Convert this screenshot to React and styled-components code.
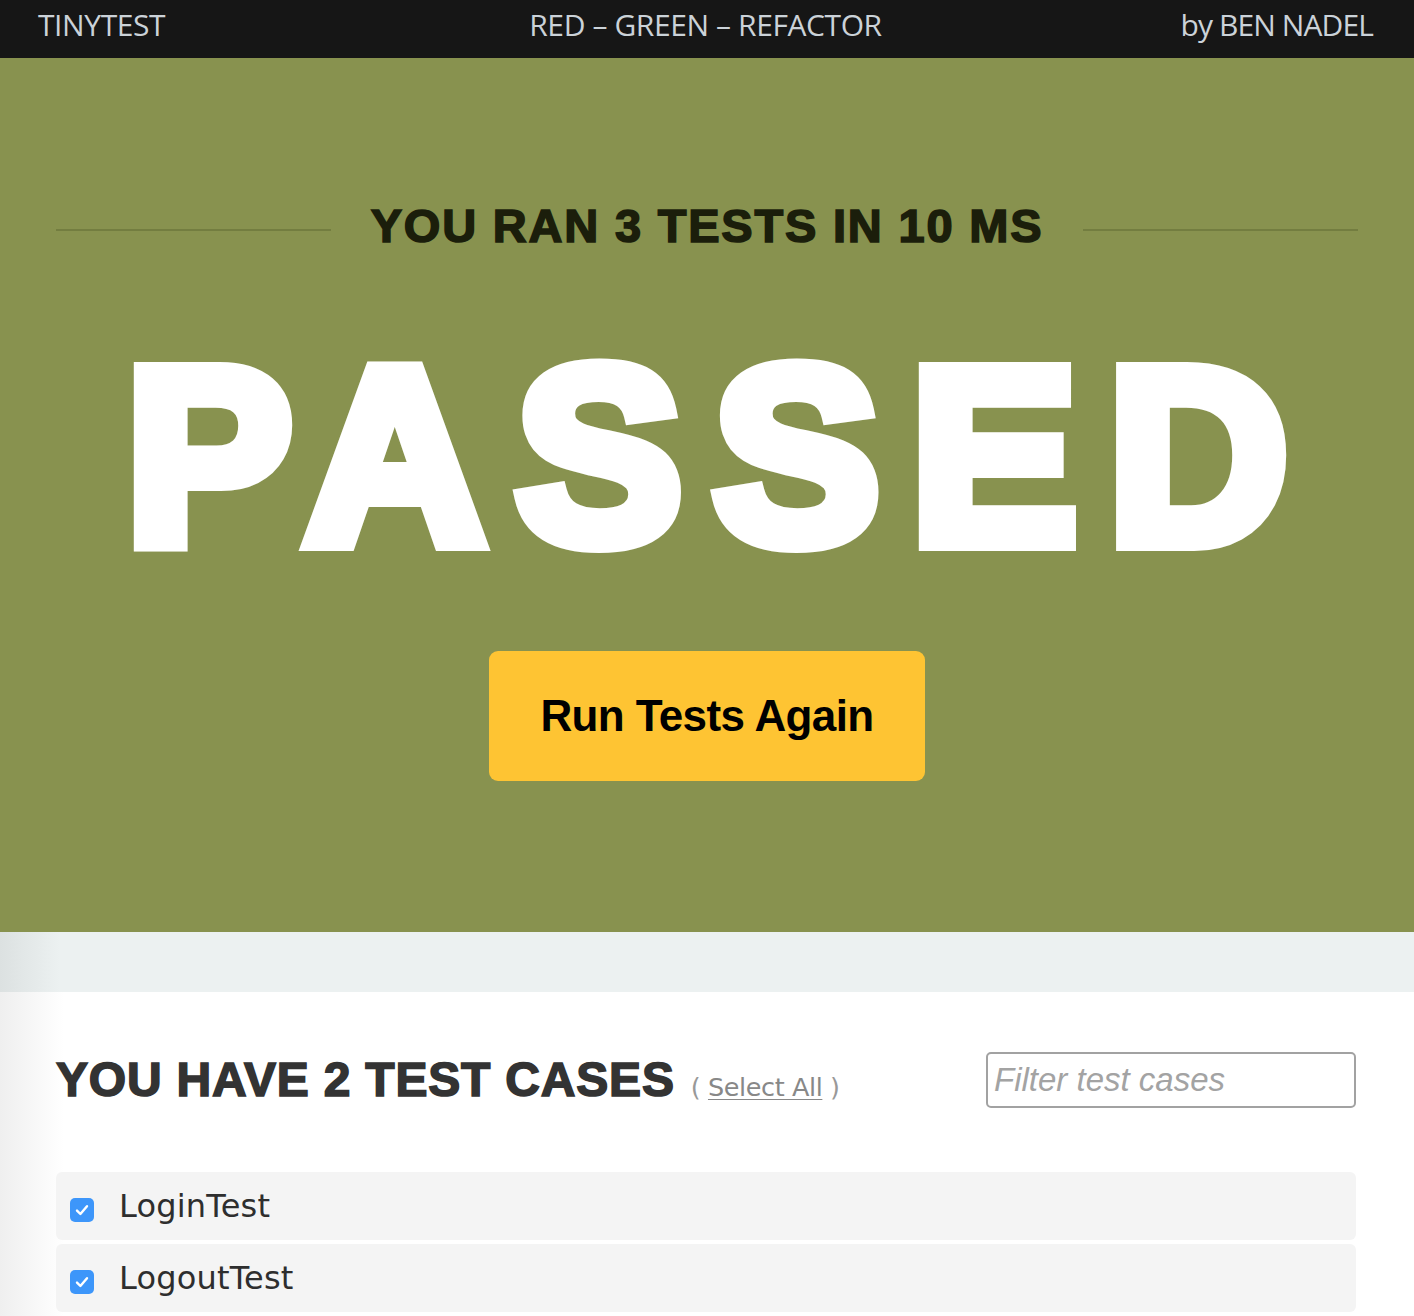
import React from "react";
import styled, { createGlobalStyle } from "styled-components";

const Global = createGlobalStyle`
  * { box-sizing: border-box; }
  html, body { margin: 0; padding: 0; background: #fff; }
  body { font-family: "Liberation Sans", Arial, sans-serif; }
`;

const Page = styled.div`
  width: 100%;
  min-height: 1316px;
  background: #fff;
`;

const TopBar = styled.header`
  height: 58px;
  background: #161616;
  display: grid;
  grid-template-columns: 1fr auto 1fr;
  align-items: center;
  padding: 0 41px 0 38px;
  font-family: "Open Sans", "DejaVu Sans", sans-serif;
  font-size: 30px;
  color: #cbd2d8;
  letter-spacing: -0.4px;
`;

const BarItem = styled.div`
  justify-self: ${(p) => p.$align || "start"};
  white-space: nowrap;
  line-height: 1;
  padding-bottom: 8px;
  letter-spacing: ${(p) => (p.$tight ? "-0.9px" : "inherit")};
`;

const Hero = styled.section`
  background: #88924f;
  height: 874px;
  padding: 144px 56px 0;
  display: flex;
  flex-direction: column;
  align-items: center;
`;

const SummaryRow = styled.div`
  width: 100%;
  display: flex;
  align-items: center;
  gap: 40px;
`;

const Rule = styled.div`
  flex: 1;
  height: 2px;
  background: #737d40;
  margin-top: 8px;
`;

const Summary = styled.h2`
  margin: 0;
  font-family: "Liberation Sans", Arial, sans-serif;
  font-weight: 700;
  font-size: 47px;
  line-height: 48px;
  letter-spacing: 1.8px;
  color: #1b1e0b;
  -webkit-text-stroke: 1.6px #1b1e0b;
  white-space: nowrap;
`;

const Verdict = styled.h1`
  margin: 71px 0 0;
  font-family: "Liberation Sans", Arial, sans-serif;
  font-weight: 700;
  font-size: 248px;
  line-height: 270px;
  letter-spacing: 32px;
  padding-left: 32px;
  color: #fff;
  -webkit-text-stroke: 18px #fff;
  white-space: nowrap;
`;

const RunButton = styled.button`
  margin-top: 60px;
  width: 436px;
  height: 130px;
  border: none;
  border-radius: 9px;
  background: #fec433;
  color: #000;
  font-family: "Liberation Sans", Arial, sans-serif;
  font-weight: 700;
  font-size: 44px;
  letter-spacing: -0.6px;
  cursor: pointer;
  padding: 0;
`;

const Strip = styled.div`
  height: 60px;
  background: linear-gradient(to right, #dce1e1 0, #ecf1f1 60px);
`;

const Cases = styled.section`
  background: linear-gradient(to right, #efefef 0, #ffffff 64px);
  padding: 60px 58px 4px 56px;
  min-height: 324px;
`;

const CasesHeader = styled.div`
  display: flex;
  align-items: center;
  justify-content: space-between;
  height: 56px;
`;

const TitleGroup = styled.div`
  display: flex;
  align-items: baseline;
  gap: 16px;
`;

const CasesTitle = styled.h2`
  margin: 0;
  font-family: "Liberation Sans", Arial, sans-serif;
  font-weight: 700;
  font-size: 48px;
  line-height: 56px;
  letter-spacing: 0.8px;
  color: #333;
  -webkit-text-stroke: 1.6px #333;
  white-space: nowrap;
`;

const SelectAllWrap = styled.span`
  font-family: "DejaVu Sans", "Open Sans", sans-serif;
  font-size: 25.5px;
  color: #999;
  white-space: nowrap;
  letter-spacing: -0.4px;
`;

const SelectLink = styled.a`
  color: #888;
  text-decoration: underline;
  text-underline-offset: 3px;
  text-decoration-thickness: 1px;
  cursor: pointer;
`;

const FilterInput = styled.input`
  width: 370px;
  height: 56px;
  border: 2px solid #a2a2a2;
  border-radius: 5px;
  padding: 0 6px;
  font-family: "Liberation Sans", Arial, sans-serif;
  font-style: italic;
  font-size: 33px;
  color: #333;
  background: #fff;
  outline: none;
  &::placeholder {
    color: #a3a3a3;
    font-style: italic;
  }
`;

const CaseList = styled.ul`
  list-style: none;
  margin: 64px 0 0;
  padding: 0;
  display: flex;
  flex-direction: column;
  gap: 4px;
`;

const CaseRow = styled.li`
  height: 68px;
  background: #f4f4f4;
  border-radius: 6px;
  display: flex;
  align-items: center;
  padding: 0 14px;
  gap: 25px;
`;

const Check = styled.span`
  width: 24px;
  height: 24px;
  border-radius: 5px;
  background: #3d96fa;
  display: inline-flex;
  align-items: center;
  justify-content: center;
  margin-top: 8px;
  flex: none;
`;

const CaseName = styled.span`
  font-family: "DejaVu Sans", "Open Sans", sans-serif;
  font-size: 32px;
  color: #2e2e2e;
  letter-spacing: 0.2px;
  line-height: 1;
`;

const CheckMark = () => (
  <svg width="16" height="16" viewBox="0 0 16 16" fill="none">
    <path d="M3 8.6 L6.4 12 L13 4.2" stroke="#fff" strokeWidth="2.4" strokeLinecap="round" strokeLinejoin="round" />
  </svg>
);

const cases = ["LoginTest", "LogoutTest"];

export default function App() {
  return (
    <Page>
      <Global />
      <TopBar>
        <BarItem>TINYTEST</BarItem>
        <BarItem $align="center">RED – GREEN – REFACTOR</BarItem>
        <BarItem $align="end" $tight>by BEN NADEL</BarItem>
      </TopBar>
      <Hero>
        <SummaryRow>
          <Rule />
          <Summary>YOU RAN 3 TESTS IN 10 MS</Summary>
          <Rule />
        </SummaryRow>
        <Verdict>PASSED</Verdict>
        <RunButton>Run Tests Again</RunButton>
      </Hero>
      <Strip />
      <Cases>
        <CasesHeader>
          <TitleGroup>
            <CasesTitle>YOU HAVE 2 TEST CASES</CasesTitle>
            <SelectAllWrap>
              ( <SelectLink>Select All</SelectLink> )
            </SelectAllWrap>
          </TitleGroup>
          <FilterInput placeholder="Filter test cases" />
        </CasesHeader>
        <CaseList>
          {cases.map((c) => (
            <CaseRow key={c}>
              <Check>
                <CheckMark />
              </Check>
              <CaseName>{c}</CaseName>
            </CaseRow>
          ))}
        </CaseList>
      </Cases>
    </Page>
  );
}
